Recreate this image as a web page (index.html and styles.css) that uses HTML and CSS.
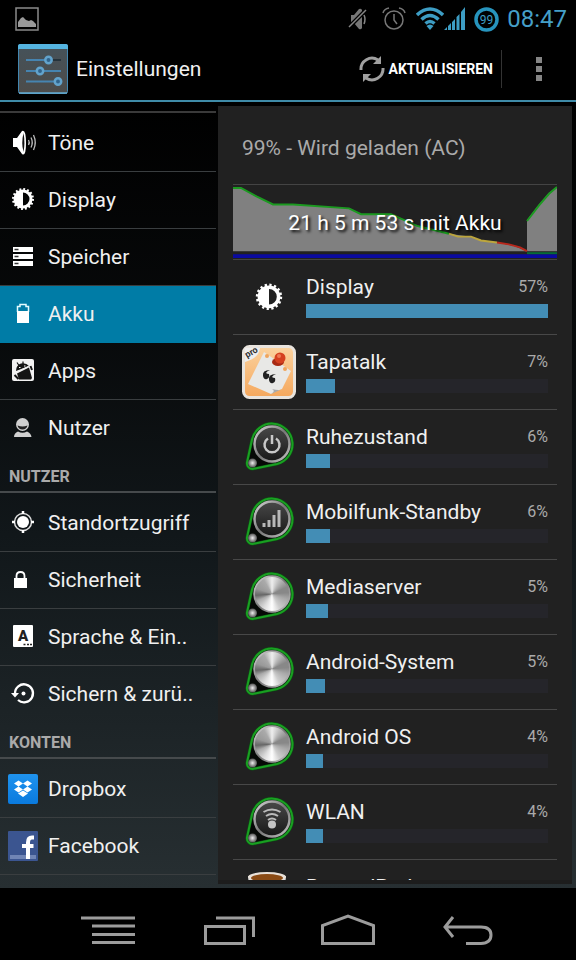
FILE: index.html
```html
<!DOCTYPE html>
<html lang="de">
<head>
    <meta charset="UTF-8">
    <meta name="viewport" content="width=device-width, initial-scale=1.0">
    <title>Einstellungen</title>
    <link rel="stylesheet" href="styles.css">
</head>
<body>
    <!-- shared icon shapes -->
    <svg class="defs" width="0" height="0" aria-hidden="true">
        <defs>
            <linearGradient id="rim" x1="0" y1="0" x2="1" y2="1">
                <stop offset="0" stop-color="#d8d8d8"/>
                <stop offset="0.5" stop-color="#777"/>
                <stop offset="1" stop-color="#c4c4c4"/>
            </linearGradient>
            <linearGradient id="face" x1="0" y1="0" x2="0" y2="1">
                <stop offset="0" stop-color="#484848"/>
                <stop offset="1" stop-color="#181818"/>
            </linearGradient>
            <radialGradient id="ball">
                <stop offset="0" stop-color="#eee"/>
                <stop offset="1" stop-color="#555"/>
            </radialGradient>
            <linearGradient id="orange" x1="0" y1="0" x2="0" y2="1">
                <stop offset="0" stop-color="#fbd3a0"/>
                <stop offset="1" stop-color="#f5a75c"/>
            </linearGradient>
            <linearGradient id="tile" x1="0" y1="0" x2="0" y2="1">
                <stop offset="0" stop-color="#45525a"/>
                <stop offset="1" stop-color="#4d4c4a"/>
            </linearGradient>
            <linearGradient id="dropblue" x1="0" y1="0" x2="0" y2="1">
                <stop offset="0" stop-color="#1f93ee"/>
                <stop offset="1" stop-color="#0a7ade"/>
            </linearGradient>
            <symbol id="knob" viewBox="0 0 54 54">
                <path d="M10 19.500A20.500 20.500 0 1 1 35 44L11.500 48.800A5.500 5.500 0 0 1 5 42.500Z" fill="#060906" stroke="#0b5512" stroke-width="3"/>
                <path d="M10 19.500A20.500 20.500 0 1 1 35 44L11.500 48.800A5.500 5.500 0 0 1 5 42.500Z" fill="none" stroke="#1a9f22" stroke-width="2"/>
                <circle cx="30" cy="24" r="17.500" fill="url(#face)" stroke="url(#rim)" stroke-width="2.500"/>
                <circle cx="10.500" cy="43" r="4.500" fill="url(#ball)"/>
            </symbol>
            <symbol id="sun" viewBox="0 0 30 30">
                <circle cx="15" cy="14" r="9.500" fill="none" stroke="#fff" stroke-width="3" stroke-dasharray="1.800 1.930"/>
                <circle cx="15" cy="14" r="8" fill="none" stroke="#fff" stroke-width="3"/>
                <path d="M15 6a8 8 0 0 0 0 16z" fill="#fff"/>
            </symbol>
        </defs>
    </svg>

    <header class="statusbar">
        <svg class="notify" width="24" height="24" viewBox="0 0 24 24">
            <rect x="1" y="1" width="22" height="22" fill="none" stroke="#8a8a8a" stroke-width="1.500"/>
            <path d="M3 20v-5l3-4 2-1 3 3 3 1 2-1 2 1 3 3v3z" fill="#9a9a9a"/>
        </svg>
        <svg class="mute" width="20" height="24" viewBox="0 0 20 24">
            <path d="M3 8h3l5-6q2-1 3 1v18q-1 2-3 1l-5-6h-3z" fill="#777"/>
            <path d="M1 20L18 3" stroke="#000" stroke-width="4"/>
            <path d="M1 20L18 3M16 8q2 4 0 9" fill="none" stroke="#858585" stroke-width="1.500"/>
        </svg>
        <svg class="alarm" width="24" height="24" viewBox="0 0 24 24" fill="none" stroke="#777" stroke-width="1.500">
            <circle cx="12" cy="13" r="9"/>
            <path d="M12 7v6l3 4M1 6q1-4 6-5M23 6q-1-4-6-5"/>
        </svg>
        <svg class="wifi" width="28" height="24" viewBox="0 0 28 24" fill="none" stroke="#3d9dc4" stroke-width="3.500">
            <path d="M1 8q13-12 26 0M5.500 12.500q8.500-8 17 0M9.500 16.500q4.500-4 9 0"/>
            <path d="M10.500 19q3.500-3 7 0l-3.500 4z" fill="#3d9dc4" stroke="none"/>
        </svg>
        <svg width="22" height="24" viewBox="0 0 22 24" fill="#3d9dc4">
            <path d="M0 23l3-3v3zM4 19l3-3v7h-3zM8 15l3-3v11h-3zM12.500 10l3-3v16h-3zM17 5l4-5v23h-4z"/>
        </svg>
        <svg class="ring" width="25" height="25" viewBox="0 0 25 25">
            <circle cx="12.500" cy="12.500" r="10.500" fill="none" stroke="#2794bd" stroke-width="3.500"/>
            <text x="12.500" y="16.500" text-anchor="middle" class="ring-text">99</text>
        </svg>
        <time class="clock">08:47</time>
    </header>

    <div class="actionbar">
        <svg width="50" height="50" viewBox="0 0 50 50">
            <rect x="0.500" y="0.500" width="49" height="49" rx="2" fill="url(#tile)" stroke="#4286b0"/>
            <path d="M0 5V2q0-2 2-2h46q2 0 2 2v3z" fill="#55b4e0"/>
            <path d="M1 49h48" stroke="#66acd2" stroke-width="1.500"/>
            <path d="M31 16h12M23 27h20" stroke="#26333b" stroke-width="2"/>
            <path d="M8 16h20M8 27h12M24 27h19M8 37.500h30" stroke="#4684b0" stroke-width="2"/>
            <g fill="#31648c" stroke="#62a3cc" stroke-width="2.500">
                <circle cx="30.500" cy="16" r="3.200"/>
                <circle cx="22" cy="27" r="3.200"/>
                <circle cx="40" cy="37.500" r="3.200"/>
            </g>
        </svg>
        <h1>Einstellungen</h1>
        <button class="refresh">
            <svg width="26" height="28" viewBox="0 0 26 28">
                <path d="M2 15A11 11 0 0 1 19 5M24 13A11 11 0 0 1 7 23" fill="none" stroke="#a0a0a0" stroke-width="3"/>
                <path d="M22 1v8h-8zM4 27v-8h8z" fill="#a0a0a0"/>
            </svg>
            Aktualisieren
        </button>
        <button class="overflow" aria-label="Weitere Optionen">
            <svg width="8" height="24" viewBox="0 0 8 24" fill="#858585">
                <path d="M1 0h6v6H1zM1 9h6v6H1zM1 18h6v6H1z"/>
            </svg>
        </button>
    </div>

    <main>
        <nav class="sidebar">
            <div class="edge"></div>
            <a href="#">
                <svg width="30" height="30" viewBox="0 0 30 30">
                    <path d="M5 10h4l5-7q4-2 4 12t-4 11l-5-7H5z" fill="#fff"/>
                    <path d="M15.500 5q-2.500 10 0 19 1.800-9 0-19z" fill="#111"/>
                    <path d="M20.500 12q1.500 2.500 0 5M23 9.500q2.500 5 0 10M25.500 7q3.500 7.500 0 15" fill="none" stroke="#bbb" stroke-width="1.300"/>
                </svg>
                Töne
            </a>
            <a href="#">
                <svg width="30" height="30"><use href="#sun"/></svg>
                Display
            </a>
            <a href="#">
                <svg width="30" height="30" viewBox="0 0 30 30">
                    <path d="M5 5h20v5H5zM5 12h20v5H5zM5 19h20v5H5z" fill="#fff"/>
                    <path d="M6.500 7.500h4M6.500 14.500h4M6.500 21.500h4" stroke="#333" stroke-width="1.300"/>
                </svg>
                Speicher
            </a>
            <a href="#" class="active">
                <svg width="30" height="30" viewBox="0 0 30 30">
                    <path d="M9.500 13V7.500h2.500V5.500h6v2h2.500V13" fill="none" stroke="#e4fbff" stroke-width="1.500"/>
                    <path d="M9 12h12v12H9z" fill="#fff"/>
                </svg>
                Akku
            </a>
            <a href="#">
                <svg width="30" height="30" viewBox="0 0 30 30">
                    <rect x="4" y="3" width="22" height="22" rx="2" fill="#f2f2f2"/>
                    <path d="M8 15q0-6 5-7.500 5-1 8 2.500z" fill="#151515"/>
                    <path d="M9 6.500l2 3M15 5.500v3" stroke="#151515" stroke-width="1.200"/>
                    <path d="M9 17.500l12-6 3 10.500-1 1.500H11z" fill="#151515"/>
                    <path d="M8 16.500l13-6.500" stroke="#f2f2f2"/>
                    <path d="M22.500 10l1.500 4M6.500 19l4 4" stroke="#151515" stroke-width="2"/>
                    <path d="M11 11.500h1.500M16 10h1.500" stroke="#fff"/>
                </svg>
                Apps
            </a>
            <a href="#">
                <svg width="30" height="30" viewBox="0 0 30 30">
                    <circle cx="14.500" cy="11.500" r="6.500" fill="#d0d0d0"/>
                    <path d="M6 24q0-4 4-5.500 4.500 2.500 9 0 4 1.500 4.500 5.500z" fill="#d0d0d0"/>
                    <path d="M9.500 12.500q5 2 10 0-1 4-5 4t-5-4z" fill="#222"/>
                </svg>
                Nutzer
            </a>
            <h2>Nutzer</h2>
            <a href="#">
                <svg width="30" height="30" viewBox="0 0 30 30">
                    <circle cx="15" cy="14" r="6" fill="#fff"/>
                    <circle cx="15" cy="14" r="8.500" fill="none" stroke="#ddd" stroke-width="1.500"/>
                    <path d="M15 3v3M15 22v3M4 14h3M23 14h3" stroke="#fff" stroke-width="2.500"/>
                </svg>
                Standortzugriff
            </a>
            <a href="#">
                <svg width="30" height="30" viewBox="0 0 30 30">
                    <path d="M6 13h13v10H6z" fill="#fff"/>
                    <path d="M8.500 13v-2q0-4 4-4t4 4v2" fill="none" stroke="#fff" stroke-width="1.800"/>
                </svg>
                Sicherheit
            </a>
            <a href="#">
                <svg width="30" height="30" viewBox="0 0 30 30">
                    <rect x="5" y="3" width="20" height="22" rx="1" fill="#fff"/>
                    <text x="15" y="19" text-anchor="middle" class="lang">A</text>
                    <path d="M15.500 22.500h2M19 22.500h2M22 22.500h2" stroke="#222" stroke-width="1.500"/>
                </svg>
                Sprache &amp; Ein..
            </a>
            <a href="#">
                <svg width="30" height="30" viewBox="0 0 30 30">
                    <path d="M7 14.500a9 9 0 1 1 3 6.500" fill="none" stroke="#fff" stroke-width="2.300"/>
                    <path d="M3 14h8l-4 4.500z" fill="#fff"/>
                    <circle cx="15.500" cy="14.500" r="2" fill="#fff"/>
                </svg>
                Sichern &amp; zurü..
            </a>
            <h2>Konten</h2>
            <a href="#">
                <svg width="30" height="30" viewBox="0 0 30 30">
                    <rect width="30" height="30" rx="2" fill="url(#dropblue)"/>
                    <path d="M10.500 6.500l4.500 3-4.500 3-4.500-3zM19.500 6.500l4.500 3-4.500 3-4.500-3zM10.500 12.500l4.500 3-4.500 3-4.500-3zM19.500 12.500l4.500 3-4.500 3-4.500-3zM10 19.500l5-3 5 3-5 3.500z" fill="#fff"/>
                </svg>
                Dropbox
            </a>
            <a href="#">
                <svg width="30" height="30" viewBox="0 0 30 30">
                    <rect width="30" height="30" rx="1" fill="#3b5590"/>
                    <path d="M2 24h26v4H2z" fill="#7085b5"/>
                    <path d="M26 6.500h-2q-4 0-4 5V28M14 15h11.500" fill="none" stroke="#fff" stroke-width="4"/>
                </svg>
                Facebook
            </a>
        </nav>

        <section class="panel">
            <p class="state">99% - Wird geladen (AC)</p>
            <div class="chart">
                <svg viewBox="0 0 324 76" preserveAspectRatio="none">
                    <path d="M0 3H8L24 12L40 20H60L116 24L128 30H158L184 42L216 50L236 53L248 57L265 59L282 63L294 68H0Z" fill="#808080"/>
                    <path d="M294 68V36L306 20L316 8L324 2V68Z" fill="#808080"/>
                    <g fill="none" stroke-width="2">
                        <path d="M0 3H8L24 12L40 20H60L116 24L128 30H158L184 42L216 50M294 37L306 21L316 9L324 2" stroke="#1b9a20"/>
                        <path d="M216 50L225 53H238L248 57L264 59" stroke="#bda63c"/>
                        <path d="M264 59L276 61L287 64L294 68" stroke="#b8281c"/>
                    </g>
                    <path d="M0 71h324v4H0z" fill="#0a0aa0"/>
                    <path d="M294 69h30v2h-30z" fill="#076b38"/>
                </svg>
                <span>21 h 5 m 53 s mit Akku</span>
            </div>
            <ul class="usage">
                <li>
                    <svg class="icon" width="54" height="54" viewBox="0 0 54 54"><use href="#sun" x="9" y="10" width="36" height="36"/></svg>
                    <div class="info">
                        <div class="line"><span>Display</span><small>57%</small></div>
                        <div class="bar"><div style="width: 100%"></div></div>
                    </div>
                </li>
                <li>
                    <svg class="icon" width="54" height="54" viewBox="0 0 54 54">
                        <rect x="1.500" y="1.500" width="51" height="51" rx="6" fill="url(#orange)" stroke="#e9e4de" stroke-width="3"/>
                        <path d="M3 3h15q-1 10-15 14z" fill="#eee"/>
                        <text class="pro" x="5" y="13" transform="rotate(-30 5 13)">pro</text>
                        <path d="M22 7L49 26L40 44Q33 46 29 49L6 39Z" fill="#e8e8e6"/>
                        <path d="M29 49q5-3 1-5 8 2 10 0-4 2-11 5z" fill="#aaa"/>
                        <circle cx="25" cy="11" r="2" fill="#f0a45c"/>
                        <circle cx="43" cy="24" r="2" fill="#f0a45c"/>
                        <path d="M28 25q-8 0-7 6 1 4 4 3t2-5q-2 0-3-1 1-2 4-3zM34 29q-8 0-7 6 1 4 4 3t2-5q-2 0-3-1 1-2 4-3z" fill="#222"/>
                        <ellipse cx="36" cy="17" rx="6" ry="4" fill="#a82a14"/>
                        <circle cx="38" cy="13" r="5.500" fill="#d5401f"/>
                        <circle cx="37" cy="11" r="2" fill="#ee7954"/>
                    </svg>
                    <div class="info">
                        <div class="line"><span>Tapatalk</span><small>7%</small></div>
                        <div class="bar"><div style="width: 12%"></div></div>
                    </div>
                </li>
                <li>
                    <svg class="icon" width="54" height="54" viewBox="0 0 54 54">
                        <use href="#knob"/>
                        <path d="M26 18.500a7.500 7.500 0 1 0 8 0M30 15v9" fill="none" stroke="#c8c8c8" stroke-width="2.500"/>
                    </svg>
                    <div class="info">
                        <div class="line"><span>Ruhezustand</span><small>6%</small></div>
                        <div class="bar"><div style="width: 10%"></div></div>
                    </div>
                </li>
                <li>
                    <svg class="icon" width="54" height="54" viewBox="0 0 54 54">
                        <use href="#knob"/>
                        <path d="M22 32v-4M27 32v-7M32 32V20M37 32V15" stroke="#b8b8b8" stroke-width="3"/>
                    </svg>
                    <div class="info">
                        <div class="line"><span>Mobilfunk-Standby</span><small>6%</small></div>
                        <div class="bar"><div style="width: 10%"></div></div>
                    </div>
                </li>
                <li>
                    <div class="icon metal"><svg width="54" height="54"><use href="#knob"/></svg></div>
                    <div class="info">
                        <div class="line"><span>Mediaserver</span><small>5%</small></div>
                        <div class="bar"><div style="width: 9%"></div></div>
                    </div>
                </li>
                <li>
                    <div class="icon metal"><svg width="54" height="54"><use href="#knob"/></svg></div>
                    <div class="info">
                        <div class="line"><span>Android-System</span><small>5%</small></div>
                        <div class="bar"><div style="width: 8%"></div></div>
                    </div>
                </li>
                <li>
                    <div class="icon metal"><svg width="54" height="54"><use href="#knob"/></svg></div>
                    <div class="info">
                        <div class="line"><span>Android OS</span><small>4%</small></div>
                        <div class="bar"><div style="width: 7%"></div></div>
                    </div>
                </li>
                <li>
                    <svg class="icon" width="54" height="54" viewBox="0 0 54 54">
                        <use href="#knob"/>
                        <path d="M21.500 17q8.500-5 17 0M24 21q6-4 12 0M26 25q4-3 8 0" fill="none" stroke="#bbb" stroke-width="2"/>
                        <circle cx="30" cy="29.500" r="4" fill="#c4c4c4"/>
                    </svg>
                    <div class="info">
                        <div class="line"><span>WLAN</span><small>4%</small></div>
                        <div class="bar"><div style="width: 7%"></div></div>
                    </div>
                </li>
                <li>
                    <svg class="icon" width="54" height="54" viewBox="0 0 54 54">
                        <path d="M6 6l4 42h30l4-42z" fill="#ddd"/>
                        <ellipse cx="25" cy="7" rx="19" ry="5" fill="#e8e0d8"/>
                        <ellipse cx="25" cy="8" rx="16" ry="4" fill="#8a4a14"/>
                    </svg>
                    <div class="info">
                        <div class="line"><span>BeyondPod</span></div>
                        <div class="bar"><div style="width: 5%"></div></div>
                    </div>
                </li>
            </ul>
        </section>
    </main>

    <footer class="navbar">
        <button aria-label="Menü">
            <svg width="56" height="44" viewBox="0 0 56 44">
                <path d="M1 16h54M12 24h43M12 32.500h43M12 40.500h43"/>
            </svg>
        </button>
        <button aria-label="Letzte Apps">
            <svg width="56" height="44" viewBox="0 0 56 44">
                <path d="M5.500 24.500h39v17h-39zM16 16h37.500v19"/>
            </svg>
        </button>
        <button aria-label="Startseite">
            <svg width="56" height="44" viewBox="0 0 56 44">
                <path d="M2.500 41.500v-18L28 14l25.500 9.500v18z"/>
            </svg>
        </button>
        <button aria-label="Zurück">
            <svg width="56" height="44" viewBox="0 0 56 44">
                <path d="M13 15l-8 10 8 10M5 25h36q10 0 10 8t-10 8.500H26"/>
            </svg>
        </button>
    </footer>
</body>
</html>
```

FILE: styles.css
```css
* {
    box-sizing: border-box;
}
body {
    display: flex;
    flex-direction: column;
    height: 100vh;
    margin: 0;
    background: #000;
    color: #f0f0f0;
    font-family: Roboto, "Liberation Sans", sans-serif;
    font-size: 21px;
    overflow: hidden;
}
.defs {
    position: absolute;
}
svg {
    display: block;
    flex: none;
}
button {
    display: flex;
    align-items: center;
    justify-content: center;
    padding: 0;
    border: 0;
    background: none;
    color: #fff;
    font-family: inherit;
    cursor: pointer;
}

/* status bar */
.statusbar {
    display: flex;
    align-items: center;
    flex: none;
    height: 38px;
    padding: 0 9px 0 15px;
}
.notify {
    margin-right: auto;
}
.mute {
    margin-right: 14px;
}
.alarm {
    margin-right: 10px;
}
.ring {
    margin: 0 8px;
}
.ring-text {
    fill: #3d9dc4;
    font-size: 12px;
}
.clock {
    color: #459fc8;
    font-size: 24px;
}

/* action bar */
.actionbar {
    display: flex;
    align-items: center;
    flex: none;
    height: 64px;
    padding-left: 18px;
    border-bottom: 2px solid #3f8ba8;
}
h1 {
    margin: 0 auto 0 8px;
    font-size: 21px;
    font-weight: 400;
    line-height: 28px;
}
.refresh {
    gap: 4px;
    padding-right: 8px;
    font-size: 14px;
    font-weight: 700;
    text-transform: uppercase;
}
.overflow {
    width: 75px;
    height: 38px;
    border-left: 1px solid #333;
}

main {
    display: grid;
    grid-template-columns: 3fr 5fr;
    flex: 1;
    min-height: 0;
    background: linear-gradient(#000, #080a0b 30%, #11171a 55%, #272f32);
}

/* left list */
.sidebar {
    overflow: hidden;
}
.edge {
    height: 11px;
    margin-bottom: 2px;
    border-bottom: 2px solid #3a3a3a;
}
.sidebar a {
    display: flex;
    align-items: center;
    gap: 10px;
    height: 57px;
    padding-left: 8px;
    border-bottom: 1px solid #3a3e40;
    color: #f0f0f0;
    text-decoration: none;
    white-space: nowrap;
}
.sidebar .active {
    border-color: #007ca6;
    background: #007ca6;
}
.sidebar a:has(+ h2) {
    border-color: transparent;
}
.sidebar h2 {
    height: 36px;
    margin: 0 0 2px;
    padding-left: 9px;
    border-bottom: 2px solid #464a4c;
    color: #aaa;
    font-size: 16px;
    font-weight: 700;
    line-height: 40px;
    text-transform: uppercase;
}
.lang {
    fill: #222;
    font-size: 15px;
    font-weight: 900;
}

/* battery panel */
.panel {
    margin: 4px 4px 4px 2px;
    padding: 0 15px;
    border-bottom: 4px solid #1d1d1d;
    background: #212121;
    overflow: hidden;
}
.state {
    margin: 0;
    padding: 28px 9px 22px;
    color: #aaa;
    line-height: 28px;
}
.chart {
    position: relative;
    height: 76px;
    border-top: 1px solid #444;
    border-bottom: 1px solid #444;
}
.chart svg {
    width: 100%;
    height: 100%;
}
.chart span {
    position: absolute;
    inset: 0;
    color: #fff;
    line-height: 76px;
    text-align: center;
    text-shadow: 2px 2px 3px #000;
}
.usage {
    margin: 0;
    padding: 0;
    list-style: none;
}
.usage li {
    display: flex;
    align-items: center;
    gap: 10px;
    height: 75px;
    padding: 0 9px;
    border-bottom: 1px solid #484848;
}
.icon {
    flex: none;
    width: 54px;
}
.pro {
    fill: #333;
    font-size: 9px;
    font-weight: 700;
}
.metal {
    position: relative;
}
.metal::after {
    content: "";
    position: absolute;
    top: 7px;
    left: 13px;
    width: 34px;
    height: 34px;
    border-radius: 50%;
    background: conic-gradient(#eee, #bbb 30deg, #888 65deg, #888 85deg, #aaa 110deg, #ccc 150deg, #fff 180deg, #ddd 210deg, #aaa 245deg, #666 265deg, #999 290deg, #aaa 330deg, #eee);
}
.info {
    flex: 1;
    padding-bottom: 3px;
}
.line {
    display: flex;
    align-items: center;
    justify-content: space-between;
    margin-bottom: 3px;
    line-height: 28px;
}
.line small {
    color: #aaa;
    font-size: 16px;
}
.bar {
    height: 14px;
    background: #25252a;
}
.bar div {
    height: 100%;
    background: #438db5;
}

/* soft keys */
.navbar {
    display: grid;
    grid-template-columns: repeat(4, 1fr);
    flex: none;
    height: 72px;
    padding: 0 48px;
}
.navbar svg {
    fill: none;
    stroke: #9c9c9c;
    stroke-width: 3;
}
```
